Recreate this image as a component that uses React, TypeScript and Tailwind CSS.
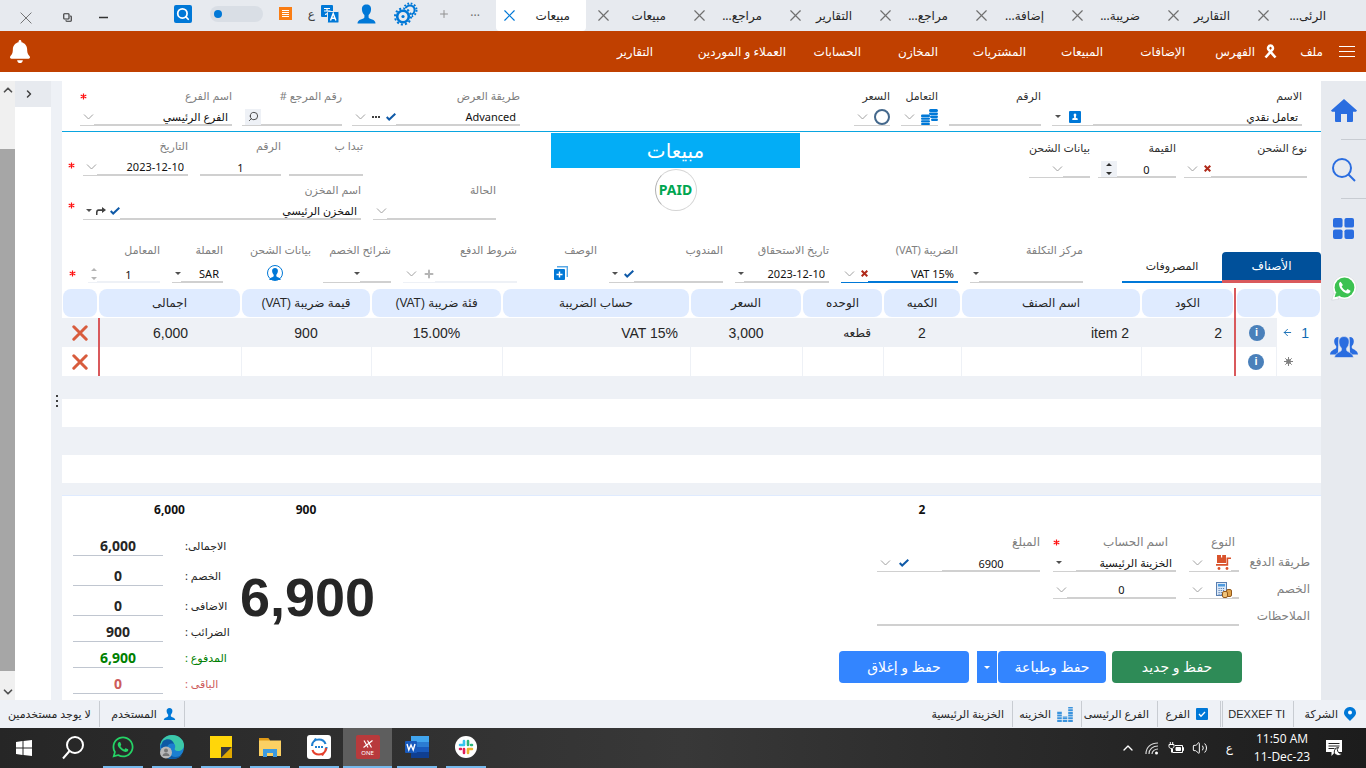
import { useId, type ReactNode } from "react";
import clsx from "clsx";
import { ArrowLeft, ChevronLeft, ChevronUp, Copy, Minus, Plus, Search, Volume2, X } from "lucide-react";
import { FaWhatsapp, FaBell } from "react-icons/fa";

const tabs = [
  { title: "الرئى...", width: "w-24" },
  { title: "التقارير", width: "w-[90px]" },
  { title: "ضريبة...", width: "w-24" },
  { title: "إضافة...", width: "w-24" },
  { title: "مراجع...", width: "w-24" },
  { title: "التقارير", width: "w-[90px]" },
  { title: "مراجع...", width: "w-24" },
  { title: "مبيعات", width: "w-24" },
  { title: "مبيعات", width: "w-[90px]", active: true },
];

const menu = [
  { title: "الإضافات", width: "w-[82px]" },
  { title: "المبيعات", width: "w-[77px]" },
  { title: "المشتريات", width: "w-[88px]" },
  { title: "المخازن", width: "w-[77px]" },
  { title: "الحسابات", width: "w-[75px]" },
  { title: "العملاء و الموردين", width: "w-[133px]" },
  { title: "التقارير", width: "w-[60px]" },
];

const columns = [
  { title: "", width: "w-[44px]" },
  { title: "", width: "w-[41px]" },
  { title: "الكود", width: "w-[95px]" },
  { title: "اسم الصنف", width: "w-[180px]" },
  { title: "الكميه", width: "w-[78px]" },
  { title: "الوحده", width: "w-[81px]" },
  { title: "السعر", width: "w-[112px]" },
  { title: "حساب الضريبة", width: "w-[188px]" },
  { title: "فئة ضريبة (VAT)", width: "w-[131px]" },
  { title: "قيمة ضريبة (VAT)", width: "w-[130px]" },
  { title: "اجمالى", width: "w-[143px]" },
  { title: "", width: "w-[36px]" },
];

const totals = [
  { title: "الاجمالى:", value: "6,000", height: "h-[30px]", color: "text-[#262626]" },
  { title: "الخصم :", value: "0", height: "h-[30px]", color: "text-[#262626]" },
  { title: "الاضافى :", value: "0", height: "h-[30px]", color: "text-[#262626]" },
  { title: "الضرائب :", value: "900", height: "h-[26px]", color: "text-[#262626]" },
  { title: "المدفوع :", value: "6,900", height: "h-[26px]", color: "text-[#008000]" },
  { title: "الباقى :", value: "0", height: "h-[26px]", color: "text-[#cd5c5c]" },
];

/* Small field glyphs */

const Chevron = () => (
  <svg className="h-[6px] w-[11px] shrink-0" viewBox="0 0 11 6" fill="none" stroke="#a0a0a0">
    <path d="M1 .5l4.500 4.500L10 .5" />
  </svg>
);

const Caret = () => (
  <svg className="h-[3px] w-[6px] shrink-0" viewBox="0 0 6 3" fill="#505050">
    <path d="M0 0h6L3 3z" />
  </svg>
);

const Tick = () => (
  <svg className="h-[8px] w-[10px] shrink-0" viewBox="0 0 10 8" fill="none" stroke="#0f5aa8" strokeWidth="2">
    <path d="M.7 4l2.500 2.500L9.300.8" />
  </svg>
);

const RedX = () => (
  <svg className="size-[7px] shrink-0" viewBox="0 0 7 7" fill="none" stroke="#b02a1a" strokeWidth="2">
    <path d="M.7.7l5.600 5.600M6.300.7L.7 6.300" />
  </svg>
);

const Star = () => (
  <svg className="size-[7px] shrink-0" viewBox="0 0 7 7" fill="none" stroke="#ff1010" strokeWidth="1.200">
    <path d="M3.500.5v6M.7 2l5.600 3M6.300 2L.7 5" />
  </svg>
);

const Spinner = ({ muted }: { muted?: boolean }) => (
  <svg className="h-[12px] w-[6px]" viewBox="0 0 6 12" fill={muted ? "#b5b5b5" : "#303030"}>
    <path d="M0 3h6L3 0zM0 9h6l-3 3z" />
  </svg>
);

const Person = ({ className }: { className: string }) => (
  <svg className={className} viewBox="0 0 20 20" fill="#0078d7">
    <path d="M10 0c-3.300 0-5 2.200-4.800 5.200.1 2.700 1.200 4.700 2.600 5.900v2.400c0 1.200-1.700 1.700-3.800 2.400C2 16.600.6 17.800.5 20h19c-.1-2.200-1.500-3.400-3.500-4.100-2.100-.7-3.800-1.200-3.800-2.400v-2.400c1.400-1.200 2.500-3.200 2.600-5.900C15 2.200 13.300 0 10 0z" />
  </svg>
);

const Gears = () => (
  <svg className="size-6" viewBox="0 0 24 24" fill="none" stroke="#0078d7">
    <circle cx="16" cy="8" r="4.600" strokeWidth="2" />
    <circle cx="16" cy="8" r="6.500" strokeWidth="2" strokeDasharray="1.700 1.700" />
    <circle cx="9" cy="14.500" r="7" fill="#e7eaef" stroke="#e7eaef" strokeWidth="4" />
    <circle cx="9" cy="14.500" r="5.800" strokeWidth="2.600" />
    <circle cx="9" cy="14.500" r="8" strokeWidth="2" strokeDasharray="2.100 2.090" />
    <circle cx="9" cy="14.500" r="1.600" fill="#0078d7" stroke="none" />
  </svg>
);

const Translate = () => (
  <svg className="size-[18px]" viewBox="0 0 18 18" fill="none">
    <rect width="12" height="12" rx="1" fill="#0078d7" />
    <path d="M3 3.500h6M3 6h6.500M6 3.500v2.500M8.500 6c-.5 2-2 3-4.500 3.500" stroke="#fff" strokeWidth="1.100" />
    <rect x="6.500" y="6.500" width="11.500" height="11.500" rx="1" fill="#0078d7" stroke="#e7eaef" />
    <path d="M9.500 15.500l2.700-7 2.700 7M10.500 13.200h3.500" stroke="#fff" strokeWidth="1.400" />
  </svg>
);

const Coins = () => (
  <svg className="h-[16px] w-[17px] shrink-0" viewBox="0 0 17 16" fill="#0078d7">
    <rect x="8" y="0" width="9" height="3" rx="1.500" />
    <rect x="8" y="3.600" width="9" height="2.400" rx="1.200" />
    <rect x="9" y="6.600" width="8" height="2.400" rx="1.200" />
    <rect x="10" y="9.600" width="7" height="2.400" rx="1.200" />
    <rect x="0" y="5.500" width="9" height="2.600" rx="1.200" />
    <rect x="0" y="8.600" width="9" height="2.200" rx="1.100" />
    <rect x="0" y="11.300" width="9" height="2.200" rx="1.100" />
    <rect x="0" y="14" width="9" height="2" rx="1" />
  </svg>
);

const Cart = () => (
  <svg className="size-[15px] shrink-0" viewBox="0 0 15 15" fill="#d9532c">
    <path d="M1 0h9v8H1z" />
    <path d="M5 0h1.200v2.500H5z" fill="#fff" />
    <path d="M0 9h10.500V2.500H15V4h-2.800v6.800H0z" />
    <path d="M1 8.200h9v.6H1z" fill="#fff" />
    <circle cx="3" cy="13.500" r="1.400" />
    <circle cx="11" cy="13.500" r="1.400" />
  </svg>
);

const Calculator = () => (
  <svg className="size-4 shrink-0" viewBox="0 0 16 16" fill="none">
    <rect x=".5" y=".5" width="10" height="13" fill="#dbe8f7" stroke="#5a7fb0" />
    <rect x="2" y="2" width="7" height="2.500" fill="#4f9be0" />
    <path d="M2.500 6.500h6.500M2.500 8.500h6.500M2.500 10.500h4M2.500 12.300h4" stroke="#5a7fb0" strokeDasharray="1.200 1" />
    <rect x="10.500" y="7.500" width="5" height="7" rx="1.500" fill="#e0a34a" stroke="#93591c" />
    <rect x="6.500" y="9.500" width="5" height="6" rx="1.500" fill="#f0c47a" stroke="#93591c" />
  </svg>
);

const Delete = () => (
  <svg className="size-4" viewBox="0 0 16 16" fill="none" stroke="#d85c3d" strokeWidth="3" strokeLinecap="round">
    <path d="M1.800 1.800l12.400 12.400M14.200 1.800L1.800 14.200" />
  </svg>
);

type FieldProps = {
  label: string;
  width: string;
  value?: string;
  icons?: ReactNode;
  select?: boolean;
  center?: boolean;
  narrow?: boolean;
  dark?: boolean;
  roomy?: boolean;
  bare?: boolean;
  required?: boolean;
  line?: string;
};

function Control({ id, label, value = "", icons, select, center, narrow, line = "border-[#d0d0d0]" }: Omit<FieldProps, "width"> & { id?: string }) {
  const shared = clsx(
    "h-5 w-full min-w-0 flex-1 appearance-none border-b-2 bg-transparent pt-1 text-[11px] leading-[14px] text-[#111] outline-none",
    narrow ? "px-0" : "px-1",
    line,
    center && "text-center",
  );
  return (
    <div className="flex h-5 w-full">
      {select ? (
        <select id={id} aria-label={id ? undefined : label} className={shared}>
          <option>{value}</option>
        </select>
      ) : (
        <input id={id} aria-label={id ? undefined : label} className={shared} defaultValue={value} />
      )}
      {icons && <span className={clsx("flex shrink-0 items-center gap-1.5 border-b pt-0.5 pl-[3px]", line)}>{icons}</span>}
    </div>
  );
}

function Field({ width, dark, roomy, bare, required, ...rest }: FieldProps) {
  const id = useId();
  return (
    <div className={clsx("flex shrink-0 flex-col", width, roomy ? "gap-[5px]" : "gap-0.5")}>
      <div className="flex h-4 items-center justify-between">
        <label htmlFor={id} className={clsx("text-[11px] leading-4 whitespace-nowrap", dark ? "text-[#303030]" : "text-[#808080]")}>
          {rest.label}
        </label>
        {required && <Star />}
      </div>
      {bare ? (
        <button id={id} type="button" className="mr-7 flex h-5 w-4 items-center justify-center">
          {rest.icons}
        </button>
      ) : (
        <Control id={id} {...rest} />
      )}
    </div>
  );
}

function TitleBar() {
  return (
    <header className="flex h-[31px] items-center bg-[#e7eaef] pr-6">
      {tabs.map(({ title, width, active }, i) => (
        <div
          key={i}
          className={clsx("flex h-full shrink-0 items-center justify-between pr-4", width, active ? "rounded-b-sm bg-white pl-2" : "pl-3")}
        >
          <a href="#" className="text-xs whitespace-nowrap text-[#262626]">{title}</a>
          <button type="button" aria-label="إغلاق">
            <X className={clsx("size-[11px]", active ? "text-[#0078d7]" : "text-[#707070]")} strokeWidth={1.5} viewBox="5 5 14 14" />
          </button>
        </div>
      ))}
      <div className="flex h-full flex-1 items-center pb-1">
        <span className="mr-4 w-[22px] pb-1 text-xs leading-3 text-[#707070]">...</span>
        <Plus className="mr-2 size-3 text-[#909090]" />
        <div className="mr-5 flex items-center gap-[18px]">
          <Gears />
          <Person className="h-5 w-[19px]" />
          <Translate />
        </div>
        <span className="mr-1.5 text-xs text-[#404040]">ع</span>
        <svg className="mr-4 size-[13px]" viewBox="0 0 13 13">
          <rect width="13" height="13" fill="#fa7d14" />
          <path d="M3 3.500h7M3 5.500h7M3 7.500h7M3 9.500h7" stroke="#fff" />
        </svg>
        <button type="button" role="switch" aria-checked="false" aria-label="الوضع" className="mr-4 flex h-4 w-[53px] items-center justify-end rounded-full bg-[#d9dee5] px-1">
          <span className="size-2 rounded-full bg-[#0078d7]" />
        </button>
        <button type="button" aria-label="بحث" className="mr-[18px] flex size-[18px] items-center justify-center rounded-xs bg-[#0078d7]">
          <Search className="size-3.5 text-white" strokeWidth={3} />
        </button>
        <div className="mt-2 mr-auto flex items-center gap-[27px] pl-5 text-[#333]">
          <Minus className="size-[9px]" strokeWidth={2} viewBox="5 5 14 14" />
          <Copy className="size-[9px] -scale-100" strokeWidth={3} />
          <span className="w-px" />
          <X className="-mr-6 size-3 text-[#606060]" strokeWidth={1} viewBox="5 5 14 14" />
        </div>
      </div>
    </header>
  );
}

function MenuBar() {
  return (
    <nav className="flex h-[41px] items-center bg-[#c04000] pr-[11px] text-xs whitespace-nowrap text-white">
      <button type="button" aria-label="القائمة" className="flex w-4 flex-col gap-1">
        <span className="h-px bg-white" />
        <span className="h-px bg-white" />
        <span className="h-px bg-white" />
      </button>
      <a href="#" className="mr-4 w-[46px]">ملف</a>
      <svg className="h-[15px] w-[13px]" viewBox="0 0 13 15" fill="none" stroke="#fff" strokeWidth="2.600">
        <path d="M1.500 13.500L8.500 5.500C9.500 4 8.500 1.500 6.500 1.500S3.500 4 4.500 5.500L11.500 13.500" />
      </svg>
      <a href="#" className="mr-[9px] w-[70px]">الفهرس</a>
      {menu.map(({ title, width }) => (
        <a key={title} href="#" className={width}>{title}</a>
      ))}
      <button type="button" aria-label="التنبيهات" className="mr-auto ml-[10px]">
        <FaBell className="h-[23px] w-5" preserveAspectRatio="none" />
      </button>
    </nav>
  );
}

function SideBar() {
  const item = "flex h-[59px] w-full items-center justify-center text-[#2a6de0]";
  return (
    <aside className="flex w-[45px] shrink-0 flex-col bg-[#e7eaef]">
      <a href="#" aria-label="الرئيسية" className={item}>
        <svg className="h-[23px] w-[26px]" viewBox="0 0 26 23" fill="currentColor">
          <path d="M13 0l13 11.500-1 1.300h-3V22a1 1 0 0 1-1 1h-5v-8h-6v8H5a1 1 0 0 1-1-1v-9.200H1l-1-1.300z" />
        </svg>
      </a>
      <div className="-mt-px h-px w-[25px] bg-[#c8ccd2]" />
      <a href="#" aria-label="بحث" className={item}>
        <svg className="size-6" viewBox="0 0 24 24" fill="none" stroke="currentColor" strokeWidth="2">
          <circle cx="10" cy="10" r="9" />
          <path d="M16.500 16.500l6.500 6.500" />
        </svg>
      </a>
      <div className="-mt-px h-px w-[25px] bg-[#c8ccd2]" />
      <a href="#" aria-label="التطبيقات" className={item}>
        <svg className="size-[21px]" viewBox="0 0 22 22" fill="currentColor">
          <rect width="10" height="10" rx="2" />
          <rect x="12" width="10" height="10" rx="2" />
          <rect y="12" width="10" height="10" rx="2" />
          <rect x="12" y="12" width="10" height="10" rx="2" />
        </svg>
      </a>
      <a href="#" aria-label="واتساب" className={item}>
        <svg className="size-[26px]" viewBox="0 0 26 26">
          <path d="M.8 25.200L2.700 18.500L8 24z" fill="#fff" stroke="#cfd3d8" strokeWidth=".6" />
          <circle cx="13.500" cy="12.500" r="12" fill="#fff" stroke="#d3d6da" strokeWidth=".6" />
          <path d="M2.200 23.800l1.600-5.500 4 4z" fill="#fff" />
          <path d="M3.600 22.300l1.400-5 3.600 3.700z" fill="#3cc251" />
          <circle cx="13.500" cy="12.500" r="9.900" fill="#3cc251" />
          <path d="M9.600 6.800c-1.100.4-1.700 1.500-1.500 2.900.5 4.300 4.600 8.400 8.800 8.700 1.500 0 2.600-1.100 2.600-2.600l-3-1.700-1.500 1.600c-2-.8-3.500-2.300-4.300-4.200l1.200-1.500z" fill="#fff" />
        </svg>
      </a>
      <a href="#" aria-label="المستخدمون" className={item}>
        <svg className="h-[22px] w-7" viewBox="0 0 28 22" fill="currentColor">
          <path d="M8.500 1C5.500 1 4 3 4.200 5.500c.1 2 .9 3.500 2 4.500v1.800c0 1.400-5.700 2-6.200 6.700h8z" />
          <path d="M19.500 1c3 0 4.500 2 4.300 4.500-.1 2-.9 3.500-2 4.500v1.800c0 1.400 5.700 2 6.200 6.700h-8z" />
          <path
            d="M14 .5c-3.600 0-5.300 2.300-5.100 5.500.1 2.800 1.200 4.900 2.500 6.100v2c0 1.900-6.300 2.300-6.900 7.400h19c-.6-5.100-6.900-5.500-6.900-7.400v-2c1.300-1.200 2.400-3.300 2.500-6.100C19.300 2.800 17.600.5 14 .5z"
            stroke="#e7eaef"
            strokeWidth=".6"
          />
        </svg>
      </a>
    </aside>
  );
}

function InvoiceHeader() {
  return (
    <>
      <div className="flex gap-2.5 border-b border-[#0aa5e0] pt-[7px] pr-[19px] pb-[5px] pl-[18px]">
        <div className="flex gap-[11px]">
          <Field
            dark select label="الاسم" width="w-[250px]" value="تعامل نقدي"
            icons={
              <span className="flex w-[38px] items-center justify-between pr-3">
                <svg className="size-3 shrink-0" viewBox="0 0 12 12">
                  <rect width="12" height="12" rx="1" fill="#0078d7" />
                  <path d="M6 2.500c1.200 0 1.500 1 1.200 2.200L6.800 6v.8l1.900.8V9H3.300V7.600l1.900-.8V6l-.4-1.300C4.500 3.500 4.800 2.500 6 2.500z" fill="#fff" />
                </svg>
                <Caret />
              </span>
            }
          />
          <Field dark label="الرقم" width="w-[92px]" />
          <Field dark narrow label="التعامل" width="w-[37px]" icons={<><Coins /><Chevron /></>} />
          <Field
            dark narrow label="السعر" width="w-[34px]"
            icons={<><span className="size-4 rounded-full border-2 border-[#44688c]" /><Chevron /></>}
          />
        </div>
        <div className="flex-1" />
        <Field
          select label="طريقة العرض" width="w-[168px]" value="Advanced"
          icons={
            <>
              <Tick />
              <svg className="h-[2px] w-2" viewBox="0 0 8 2" fill="#404040"><path d="M0 0h2v2H0zM3 0h2v2H3zM6 0h2v2H6z" /></svg>
              <Chevron />
            </>
          }
        />
        <Field
          label="رقم المرجع #" width="w-[100px]"
          icons={<span className="flex h-4 w-4 items-center justify-center bg-[#eef1f6]"><Search className="size-[11px] -scale-x-100 text-[#404040]" /></span>}
        />
        <Field select required label="اسم الفرع" width="w-[152px]" value="الفرع الرئيسي" icons={<Chevron />} />
      </div>

      <div className="flex pb-[19px]">
        <div className="flex flex-1 gap-2 pt-2 pr-[14px]">
          <Field dark select label="نوع الشحن" width="w-[123px]" icons={<><RedX /><Chevron /></>} />
          <Field
            dark center label="القيمة" width="w-[78px]" value="0"
            icons={<span className="flex h-4 w-4 items-center justify-center bg-[#eef1f6]"><Spinner /></span>}
          />
          <Field dark label="بيانات الشحن" width="w-[61px]" icons={<span className="ml-5"><Chevron /></span>} />
        </div>
        <div className="flex w-[249px] shrink-0 flex-col items-center pt-px">
          <h1 className="flex h-[35px] w-full items-center justify-center bg-[#03adf6] text-xl text-white">مبيعات</h1>
          <div className="mt-px flex size-[42px] items-center justify-center rounded-full border border-[#d5d5d5] border-l-[#b0b0b0] font-['Noto_Sans','DejaVu_Sans',sans-serif] text-sm font-bold text-[#00a651]">
            PAID
          </div>
        </div>
        <div className="flex w-[489px] shrink-0 flex-col items-end gap-1.5 pt-1.5 pl-1.5">
          <div className="flex items-center gap-2">
            <Field label="تبدا ب" width="w-[74px]" />
            <Field center label="الرقم" width="w-[81px]" value="1" />
            <div className="mr-1 flex">
              <Field select label="التاريخ" width="w-[105px]" value="2023-12-10" icons={<Chevron />} />
            </div>
            <span className="pt-4"><Star /></span>
          </div>
          <div className="flex items-center gap-2">
            <div className="ml-1 flex"><Field select label="الحالة" width="w-[123px]" icons={<Chevron />} /></div>
            <Field
              select label="اسم المخزن" width="w-[278px]" value="المخزن الرئيسي"
              icons={
                <span className="flex items-center gap-1">
                  <Tick />
                  <svg className="h-[8px] w-[10px]" viewBox="0 0 10 8" fill="#404040"><path d="M6 0l4 3-4 3V4H2.500C1.500 4 1.500 5 1.500 8H0C-.2 4 .3 2.200 2.500 2.200H6z" /></svg>
                  <Caret />
                </span>
              }
            />
            <span className="pt-2"><Star /></span>
          </div>
        </div>
      </div>

      <div className="flex pb-[5px]">
        <div className="flex items-end">
          <button type="button" className="h-[31px] w-[99px] rounded-t border-b-[3px] border-[#d9595c] bg-[#00509a] text-xs text-white">الأصناف</button>
          <button type="button" className="h-[31px] w-[100px] border-b-2 border-[#0078d7] text-[11px] text-[#262626]">المصروفات</button>
        </div>
        <div className="mr-[39px] flex flex-1 gap-3 pt-[3px]">
          <Field roomy select label="مركز التكلفة" width="w-[113px]" icons={<Caret />} />
          <Field
            roomy select label="الضريبة  (VAT)" width="w-[117px]" value="VAT 15%" line="border-[#0078d7]"
            icons={<><RedX /><Chevron /></>}
          />
          <Field roomy select label="تاريخ الاستحقاق" width="w-[94px]" value="2023-12-10" icons={<Caret />} />
          <Field roomy select label="المندوب" width="w-[114px]" icons={<><Tick /><Caret /></>} />
          <Field
            roomy bare label="الوصف" width="w-[68px]"
            icons={
              <svg className="size-[14px] shrink-0" viewBox="0 0 14 14">
                <path d="M3 .7h10.300V11" fill="none" stroke="#5aa9e6" strokeWidth="1.400" />
                <rect y="3" width="11" height="11" rx="1" fill="#0078d7" />
                <path d="M5.500 5.500v6M2.500 8.500h6" stroke="#fff" strokeWidth="1.400" />
              </svg>
            }
          />
          <Field
            roomy select label="شروط الدفع" width="w-[114px]" line="border-[#eef1f6]"
            icons={<><Plus className="size-3 text-[#b5b5b5]" strokeWidth={4} /><Chevron /></>}
          />
          <Field roomy select label="شرائح الخصم" width="w-[68px]" icons={<span className="ml-7"><Caret /></span>} />
          <Field
            roomy bare label="بيانات الشحن" width="w-[76px]"
            icons={<span className="flex size-4 shrink-0 items-end justify-center rounded-full border border-[#0078d7]"><Person className="size-3" /></span>}
          />
          <Field roomy select label="العملة" width="w-[51px]" value="SAR" icons={<Caret />} />
          <Field roomy center label="المعامل" width="w-[72px]" value="1" line="border-[#eef1f6]" icons={<Spinner muted />} />
          <span className="pt-7"><Star /></span>
        </div>
      </div>
    </>
  );
}

const Info = () => (
  <span className="mx-auto flex size-4 items-center justify-center rounded-full bg-[#4a80ba] text-[11px] font-bold text-white">i</span>
);

function ItemsTable() {
  const cell = "border-l border-[#eef1f6]";
  return (
    <table className="w-full table-fixed border-separate border-spacing-0 font-['Liberation_Sans','DejaVu_Sans',sans-serif]">
      <thead>
        <tr>
          {columns.map(({ title, width }, i) => (
            <th key={i} className={clsx("h-[30px] p-px font-normal", width, i === 2 && "border-r-2 border-[#d9595c]")}>
              <div className="flex h-7 items-center justify-center rounded-lg bg-[#dfebff] text-xs whitespace-nowrap text-[#262626]">{title}</div>
            </th>
          ))}
        </tr>
      </thead>
      <tbody className="text-sm text-[#262626]">
        <tr className="h-[29px] bg-[#eef1f6]">
          <td className="bg-white pr-3 text-[#0f6ab4]">
            <span className="flex items-center gap-2">1<ArrowLeft className="size-[11px]" /></span>
          </td>
          <td><Info /></td>
          <td className="border-r-2 border-[#d9595c] pr-3">2</td>
          <td className="pr-3"><span dir="ltr">item 2</span></td>
          <td className="text-center">2</td>
          <td className="pr-3 text-xs">قطعه</td>
          <td className="text-center">3,000</td>
          <td className="pr-3"><span dir="ltr">VAT 15%</span></td>
          <td className="text-center"><span dir="ltr">15.00%</span></td>
          <td className="text-center">900</td>
          <td className="border-l-2 border-[#d9595c] text-center">6,000</td>
          <td><button type="button" aria-label="حذف" className="mx-auto block"><Delete /></button></td>
        </tr>
        <tr className="h-[29px] bg-white">
          <td className="pr-7">
            <svg className="size-[9px]" viewBox="0 0 9 9" stroke="#808080">
              <path d="M4.500 0v9M0 4.500h9M1.300 1.300l6.400 6.400M7.700 1.300L1.300 7.700" />
              <circle cx="4.500" cy="4.500" r="2" fill="#808080" />
            </svg>
          </td>
          <td className="border-r border-[#eef1f6]"><Info /></td>
          <td className="border-r-2 border-l border-r-[#d9595c] border-l-[#eef1f6]" />
          {columns.slice(3, 10).map(({ title }) => <td key={title} className={cell} />)}
          <td className="border-l-2 border-[#d9595c]" />
          <td><button type="button" aria-label="حذف" className="mx-auto block"><Delete /></button></td>
        </tr>
        <tr className="h-[23px] bg-[#eef1f6]"><td colSpan={12} /></tr>
        <tr className="h-7"><td colSpan={12} /></tr>
        <tr className="h-7 bg-[#eef1f6]"><td colSpan={12} /></tr>
        <tr className="h-7"><td colSpan={12} /></tr>
        <tr className="h-[13px] bg-[#eef1f6]"><td colSpan={12} className="border-b border-[#dfebff]" /></tr>
      </tbody>
      <tfoot className="font-['Noto_Sans','DejaVu_Sans',sans-serif] text-xs font-bold text-[#111]">
        <tr className="h-7 text-center">
          <td colSpan={4} />
          <td>2</td>
          <td colSpan={4} />
          <td>900</td>
          <td>6,000</td>
          <td />
        </tr>
      </tfoot>
    </table>
  );
}

function Payment() {
  const grid = "grid grid-cols-[58px_50px_123px_163px] gap-x-[13px]";
  const text = "text-xs leading-5 whitespace-nowrap text-[#808080]";
  return (
    <div className="pt-2">
      <div className={clsx(grid, "pr-[11px]")}>
        <span />
        <span className={clsx(text, "pr-1")}>النوع</span>
        <span className={clsx(text, "flex items-center justify-between pr-2")}>اسم الحساب<Star /></span>
        <span className={text}>المبلغ</span>
      </div>
      <div className={clsx(grid, "gap-y-[7px] pr-[11px]")}>
        <span className={text}>طريقة الدفع</span>
        <Control narrow label="النوع" icons={<><Cart /><span className="w-px" /><Chevron /></>} />
        <Control select label="اسم الحساب" value="الخزينة الرئيسية" icons={<span className="flex w-5 justify-end"><Caret /></span>} />
        <Control center label="المبلغ" value="6900" icons={<span className="flex w-[62px] items-center justify-end gap-2"><Tick /><Chevron /></span>} />
        <span className={text}>الخصم</span>
        <Control narrow label="نوع الخصم" icons={<><Calculator /><span className="w-px" /><Chevron /></>} />
        <Control center select label="الخصم" value="0" icons={<Chevron />} />
        <span />
        <span className={text}>الملاحظات</span>
        <div className="col-span-3"><Control label="الملاحظات" /></div>
      </div>
      <div className="mt-[25px] flex h-8 pr-[79px] text-sm text-white">
        <button type="button" className="w-[130px] rounded bg-[#2e8b57]">حفظ و جديد</button>
        <button type="button" className="mr-1.5 w-[108px] rounded bg-[#3385ff]">حفظ وطباعة</button>
        <button type="button" aria-label="خيارات الطباعة" className="mr-px flex w-5 items-center justify-center bg-[#3385ff]">
          <svg className="h-[3px] w-[6px]" viewBox="0 0 6 3" fill="#fff"><path d="M0 0h6L3 3z" /></svg>
        </button>
        <button type="button" className="mr-2 w-[130px] rounded bg-[#3385ff]">حفظ و إغلاق</button>
      </div>
    </div>
  );
}

function Totals() {
  return (
    <div className="flex pt-0.5 pl-[11px]">
      <output className="pt-[41px] pl-[9px] font-['Liberation_Sans',sans-serif] text-[54px] leading-[60px] font-bold text-[#262626]">6,900</output>
      <div>
        {totals.map(({ title, value, height, color }) => (
          <label key={title} className={clsx("flex items-end", height, color)}>
            <span className="w-[68px] pl-[22px] text-left text-[11px] leading-5 whitespace-nowrap">{title}</span>
            <input
              readOnly
              value={value}
              className="h-5 w-[90px] border-b border-[#c0c6d0] text-center font-['Noto_Sans','DejaVu_Sans',sans-serif] text-sm font-bold outline-none"
            />
          </label>
        ))}
      </div>
    </div>
  );
}

function StatusBar() {
  const item = "flex h-[26px] items-center gap-1.5 border-l border-[#c8ccd2] px-2";
  return (
    <footer className="flex h-7 items-center bg-[#eef1f6] text-[11px] whitespace-nowrap text-[#262626]">
      <div className={clsx(item, "w-[73px] pr-2.5")}>
        <svg className="h-[14px] w-3" viewBox="0 0 12 14">
          <path d="M6 0a5.800 5.800 0 0 0-6 6c0 3 3.500 5 6 8 2.500-3 6-5 6-8a5.800 5.800 0 0 0-6-6z" fill="#0078d7" />
          <circle cx="6" cy="5.500" r="2" fill="#fff" />
        </svg>
        الشركة
      </div>
      <div className={clsx(item, "ml-px w-[71px] font-['Liberation_Sans',sans-serif]")}>DEXXEF TI</div>
      <label className={clsx(item, "w-16 border-r pr-3")}>
        <input type="checkbox" defaultChecked className="peer sr-only" />
        <svg className="size-3 shrink-0" viewBox="0 0 12 12" fill="none">
          <rect width="12" height="12" rx="1" fill="#0078d7" />
          <path d="M3 6l2 2.300L9 4" stroke="#fff" strokeWidth="1.300" />
        </svg>
        الفرع
      </label>
      <div className={clsx(item, "w-[76px]")}>الفرع الرئيسى</div>
      <div className={clsx(item, "w-[69px] gap-1")}>
        <svg className="h-[15px] w-4 shrink-0" viewBox="0 0 16 15" fill="none" stroke="#3a93dd" strokeWidth="4.600" strokeDasharray="2 .7">
          <path d="M13.500 15V0M8 15V9M2.500 15V4" />
        </svg>
        الخزينه
      </div>
      <div className="px-2">الخزينة الرئيسية</div>
      <div className="flex-1" />
      <div className={clsx(item, "w-[86px] border-r")}><Person className="h-3 w-[13px]" />المستخدم</div>
      <div className="px-2">لا يوجد مستخدمين</div>
    </footer>
  );
}

function TaskBar() {
  const apps = [
    { name: "WhatsApp", icon: <FaWhatsapp className="size-6 text-[#25d366]" /> },
    {
      name: "Edge",
      icon: (
        <svg className="size-6" viewBox="0 0 24 24">
          <circle cx="12" cy="12" r="12" fill="#1b7fd0" />
          <path d="M0 11C1 4 6 0 12 0c7 0 12 5 12 10 0 4-3 6-6 6s-4-1.500-3-3c1-3-1-6-5-6-5 0-9 2-10 4z" fill="#3cc9a8" />
          <path d="M3 6C7 3 13 4 14 9c-5-2-9 3-6 8 3 6 9 6 14 3-3 4-9 5-14 3C2 20-1 12 3 6z" fill="#0c59a4" />
          <circle cx="6" cy="17.500" r="6" fill="#b8b8b8" />
          <circle cx="6" cy="15.500" r="2" fill="#777" />
          <path d="M2.500 21c0-4 7-4 7 0z" fill="#777" />
        </svg>
      ),
    },
    {
      name: "Sticky Notes",
      icon: (
        <svg className="size-[22px]" viewBox="0 0 22 22">
          <path d="M0 0h22v11L11 22H0z" fill="#ffd60a" />
          <path d="M11 11h11L11 22z" fill="#3a3a3a" />
          <path d="M22 11v11H11z" fill="#e0a800" />
        </svg>
      ),
    },
    {
      name: "Explorer",
      icon: (
        <svg className="h-[19px] w-[22px]" viewBox="0 0 22 19">
          <path d="M0 0h9l2 2.500h11V18H0z" fill="#fbd063" />
          <path d="M0 0h9l2 2.500H0z" fill="#e09a16" />
          <path d="M4 19v-8h14v8h-4v-4H8v4z" fill="#3d9be0" />
        </svg>
      ),
    },
    {
      name: "Chat",
      icon: (
        <svg className="size-6" viewBox="0 0 24 24">
          <rect width="24" height="24" rx="3" fill="#fff" />
          <path d="M5 11c0-4 3-6.500 7-6.500 3 0 5.500 1.500 6.500 4.500M7 6.500L9 3.500M19.500 12c0 1-.3 2-.8 3" fill="none" stroke="#1f7fd0" strokeWidth="2.200" />
          <path d="M19 13c0 4-3 6.500-7 6.500-3 0-5.500-1.500-6.500-4.500M17 17.500l-2 3" fill="none" stroke="#e5402c" strokeWidth="2.200" />
          <path d="M8 11h2v2H8zM11 11h2v2h-2zM14 11h2v2h-2z" fill="#1f7fd0" />
        </svg>
      ),
    },
    {
      name: "Dexef",
      active: true,
      icon: (
        <span className="flex size-6 flex-col items-center justify-end rounded-xs bg-[#b83a3c] pb-0.5 text-[6px] leading-[7px] text-white">
          <svg className="mb-0.5 h-[8px] w-[10px]" viewBox="0 0 10 8" fill="none" stroke="#fff" strokeWidth="1.200">
            <path d="M1 .5l4 7M4.500.5l4 7M9.500.5L.5 7.500" />
          </svg>
          ONE
        </span>
      ),
    },
    {
      name: "Word",
      icon: (
        <svg className="h-[22px] w-6" viewBox="0 0 24 22">
          <path d="M6 0h18v6H6z" fill="#41a5ee" />
          <path d="M6 6h18v5H6z" fill="#2b7cd3" />
          <path d="M6 11h18v5H6z" fill="#185abd" />
          <path d="M6 16h18v6H6z" fill="#103f91" />
          <rect y="5" width="12" height="12" rx="1" fill="#185abd" />
          <path d="M2 8l1.800 6L6 9l2.200 5L10 8" fill="none" stroke="#fff" strokeWidth="1.400" />
        </svg>
      ),
    },
    {
      name: "Slack",
      icon: (
        <svg className="size-[22px] rounded-full bg-white" viewBox="0 0 22 22" strokeWidth="2.600" strokeLinecap="round">
          <path d="M9 5v4M5 9h4" stroke="#36c5f0" />
          <path d="M13 5v4M17 9h-1" stroke="#2eb67d" />
          <path d="M13 17v-4M13 13h4" stroke="#ecb22e" />
          <path d="M9 17v-4M5 13h1" stroke="#e01e5a" />
        </svg>
      ),
    },
  ];
  return (
    <div dir="ltr" className="flex h-10 items-center bg-linear-to-r from-[#262626] via-[#383838] to-[#1c1c1c] text-white">
      <button type="button" aria-label="Start" className="flex w-12 justify-center">
        <svg className="size-4" viewBox="0 0 16 16" fill="#fff">
          <path d="M0 2l6.500-1v6.500H0zM7.500.9L16 0v7.500H7.500zM0 8.500h6.500V15L0 14zM7.500 8.500H16V16l-8.500-1z" />
        </svg>
      </button>
      <button type="button" aria-label="Search" className="flex w-[50px] justify-center">
        <svg className="h-6 w-[22px]" viewBox="0 0 22 24" fill="none" stroke="#fff" strokeWidth="2">
          <circle cx="13" cy="9" r="8" />
          <path d="M7.500 15L1 22.500" />
        </svg>
      </button>
      {apps.map(({ name, icon, active }) => (
        <button
          key={name}
          type="button"
          aria-label={name}
          className={clsx("flex h-10 w-[49px] flex-col items-center", active && "bg-[#5e5e5e]")}
        >
          <span className="flex flex-1 items-center">{icon}</span>
          <span className={clsx("h-0.5 bg-[#76b9ed]", active ? "w-full" : "w-10")} />
        </button>
      ))}
      <div className="flex-1" />
      <div className="flex items-center gap-2">
        <ChevronUp className="size-4" />
        <svg className="size-4" viewBox="0 0 16 16" fill="none" stroke="#d8d8d8" strokeWidth="1.200">
          <path d="M2 14C2 7 7 3 14 3M5 14c0-5 4-8 9-8M8 14c0-3 3-5 6-5" />
          <circle cx="12.500" cy="13" r="1.500" fill="#fff" stroke="none" />
        </svg>
        <svg className="size-4" viewBox="0 0 16 16" fill="none" stroke="#fff">
          <path d="M7 5.500h7.500v7H4.500V9M14.500 7.500h1v3h-1" />
          <path d="M8 7.500h4.500v3H8z" fill="#fff" />
          <path d="M1 4.500h5v2c0 1-1 2-2.500 2S1 7.500 1 6.500zM2.300 4.500V2M4.700 4.500V2M3.500 8.500v4" />
        </svg>
        <Volume2 className="size-4" strokeWidth={1.500} />
      </div>
      <span className="ml-[18px] text-xs">ع</span>
      <div className="ml-[17px] w-16 text-center font-['Open_Sans',sans-serif] text-xs leading-[18px] whitespace-nowrap">
        <div>11:50 AM</div>
        <div>11-Dec-23</div>
      </div>
      <button type="button" aria-label="Notifications" className="mr-6 ml-3">
        <svg className="size-4" viewBox="0 0 16 16" fill="#fff">
          <path d="M0 0h16v12h-7l-3.500 4v-4H0z" />
          <path d="M2.500 3.500h11M2.500 6h11M2.500 8.500h6" stroke="#222" />
          <path d="M12.500 7.500a4 4 0 1 0 3.500 5.500a3.300 3.300 0 0 1-3.500-5.500z" stroke="#222" />
        </svg>
      </button>
    </div>
  );
}

export default function App() {
  return (
    <div dir="rtl" className="flex min-h-screen flex-col overflow-hidden bg-white font-['Noto_Sans','DejaVu_Sans',sans-serif]">
      <TitleBar />
      <MenuBar />
      <div className="flex flex-1 pt-[9px]">
        <SideBar />
        <main className="min-w-0 flex-1">
          <InvoiceHeader />
          <ItemsTable />
          <div className="flex justify-between">
            <Payment />
            <Totals />
          </div>
        </main>
        <div className="flex w-[11px] shrink-0 items-center justify-center bg-[#eef1f6]">
          <svg className="mt-5 h-3 w-0.5" viewBox="0 0 2 12" fill="#404040"><path d="M0 0h2v2H0zM0 5h2v2H0zM0 10h2v2H0z" /></svg>
        </div>
        <div className="w-9 shrink-0">
          <button type="button" aria-label="توسيع" className="flex h-[26px] w-full items-center justify-center bg-[#e7eaef]">
            <ChevronLeft className="mr-2 size-3 -scale-x-100 text-[#404040]" strokeWidth={3} />
          </button>
        </div>
        <div className="flex w-[15px] shrink-0 flex-col bg-[#f0f0f0]">
          <ChevronUp className="mt-0.5 size-3.5 text-[#505050]" strokeWidth={3} />
          <div className="mt-[52px] mb-3.5 flex-1 bg-[#a6a6a6]" />
          <ChevronUp className="mb-px size-3.5 rotate-180 text-[#505050]" strokeWidth={3} />
        </div>
      </div>
      <StatusBar />
      <TaskBar />
    </div>
  );
}
